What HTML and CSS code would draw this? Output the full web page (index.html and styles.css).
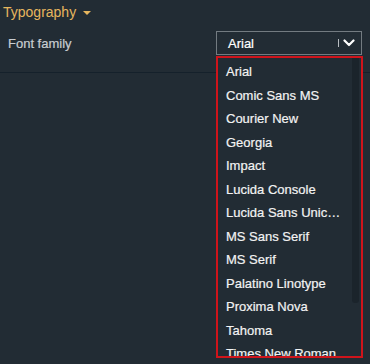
FILE: index.html
```html
<!DOCTYPE html>
<html lang="en">
<head>
  <meta charset="UTF-8" />
  <meta name="viewport" content="width=device-width, initial-scale=1.0" />
  <title>Typography</title>
  <link rel="stylesheet" href="styles.css">
</head>
<body>
  <div class="panel">
    <div class="section-title">Typography <span class="caret"></span></div>
    <div class="row">
      <label>Font family</label>
      <div class="select">
        <span class="value">Arial</span>
        <span class="sep"></span>
        <svg class="chev" width="12" height="8" viewBox="0 0 12 8">
          <path d="M1.5 1.5 L6 6 L10.5 1.5" fill="none" stroke="#fff" stroke-width="2.2" stroke-linecap="round" stroke-linejoin="round"/>
        </svg>
      </div>
    </div>

    <div class="menu">
      <div class="options">
        <div class="option">Arial</div>
        <div class="option">Comic Sans MS</div>
        <div class="option">Courier New</div>
        <div class="option">Georgia</div>
        <div class="option">Impact</div>
        <div class="option">Lucida Console</div>
        <div class="option">Lucida Sans Unicode</div>
        <div class="option">MS Sans Serif</div>
        <div class="option">MS Serif</div>
        <div class="option">Palatino Linotype</div>
        <div class="option">Proxima Nova</div>
        <div class="option">Tahoma</div>
        <div class="option">Times New Roman</div>
        <div class="option">Trebuchet MS</div>
        <div class="option">Verdana</div>
      </div>
      <div class="thumb"></div>
    </div>
  </div>
</body>
</html>
```

FILE: styles.css
```css
* {
  box-sizing: border-box;
  font-family: 'Liberation Sans', Arial, sans-serif;
}
body {
  margin: 0;
  background: #222c34;
  min-height: 100vh;
}
.panel {
  position: relative;
  width: 370px;
  height: 364px;
  overflow: hidden;
}
.section-title {
  height: 24px;
  line-height: 24px;
  padding-left: 3px;
  font-size: 14px;
  color: #e6b65e;
}
.caret {
  display: inline-block;
  margin-left: 3px;
  vertical-align: middle;
  border-left: 4px solid transparent;
  border-right: 4px solid transparent;
  border-top: 4px solid #e6b65e;
}
.row {
  display: flex;
  align-items: center;
  justify-content: space-between;
  padding: 7px 8px 17px 8px;
  border-bottom: 1px solid #15212b;
}
.row label {
  font-size: 13px;
  color: #c9ced2;
  -webkit-text-stroke: 0.2px #c9ced2;
}
.select {
  display: flex;
  align-items: center;
  width: 146px;
  height: 24px;
  padding: 0 6px 0 11px;
  border: 1px solid #737b81;
  color: #fff;
  font-size: 13px;
  -webkit-text-stroke: 0.2px #fff;
}
.select .value {
  flex: 1;
}
.sep {
  width: 1px;
  height: 8px;
  background: #b9bec2;
  margin-right: 4px;
}
.chev {
  display: block;
}
.menu {
  position: absolute;
  top: 56px;
  left: 216px;
  width: 147px;
  height: 302px;
  border: 2px solid #cf141b;
  background: #222c34;
  overflow: hidden;
}
.options {
  padding-top: 2px;
}
.option {
  height: 23.5px;
  line-height: 23.5px;
  padding-left: 8px;
  padding-right: 14px;
  font-size: 13px;
  color: #f3f3f3;
  -webkit-text-stroke: 0.2px #f3f3f3;
  white-space: nowrap;
  overflow: hidden;
  text-overflow: ellipsis;
}
.thumb {
  position: absolute;
  top: 0;
  right: 2px;
  width: 7px;
  height: 245px;
  background: #1b242b;
  border-radius: 0 0 3px 3px;
}
```
